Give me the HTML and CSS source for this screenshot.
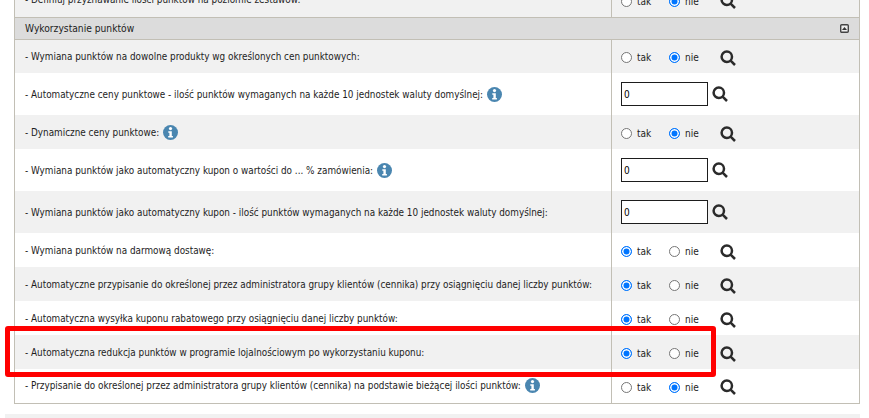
FILE: index.html
```html
<!DOCTYPE html>
<html lang="pl">

<head>
    <meta charset="UTF-8">
    <title>Program punktowy</title>
    <link rel="stylesheet" href="styles.css">
</head>

<body>
    <div class="page">
        <table class="settings">
            <tr class="odd short">
                <td class="name">- Definiuj przyznawanie ilości punktów na poziomie zestawów:</td>
                <td class="val">
                    <div class="radios">
                        <label><span class="radio"></span>tak</label>
                        <label><span class="radio on"></span>nie</label>
                        <svg class="loupe" viewBox="0 0 16 16"><circle cx="6.8" cy="6.8" r="5.2" /><path d="M10.6 10.6 15 15" /></svg>
                    </div>
                </td>
            </tr>
            <tr class="head">
                <td colspan="2">
                    <div class="head-in">
                        <span>Wykorzystanie punktów</span>
                        <svg class="toggle" viewBox="0 0 9 9"><rect x=".7" y=".7" width="7.6" height="7.6" rx="1" /><path d="M4.5 3 7 6H2z" /></svg>
                    </div>
                </td>
            </tr>
            <tr class="odd short">
                <td class="name">- Wymiana punktów na dowolne produkty wg określonych cen punktowych:</td>
                <td class="val">
                    <div class="radios">
                        <label><span class="radio"></span>tak</label>
                        <label><span class="radio on"></span>nie</label>
                        <svg class="loupe" viewBox="0 0 16 16"><circle cx="6.8" cy="6.8" r="5.2" /><path d="M10.6 10.6 15 15" /></svg>
                    </div>
                </td>
            </tr>
            <tr class="tall">
                <td class="name">- Automatyczne ceny punktowe - ilość punktów wymaganych na każde 10 jednostek waluty domyślnej:
                    <svg class="info" viewBox="0 0 15 15"><circle cx="7.5" cy="7.5" r="7.5" /><circle class="dot" cx="7.5" cy="3.6" r="1.6" /><path class="dot" d="M5.3 6.2h3.5v4.9h1.1v1.5H5.2v-1.5h1.2V7.7H5.3z" /></svg>
                </td>
                <td class="val">
                    <div class="amount">
                        <input type="text" value="0">
                        <svg class="loupe" viewBox="0 0 16 16"><circle cx="6.8" cy="6.8" r="5.2" /><path d="M10.6 10.6 15 15" /></svg>
                    </div>
                </td>
            </tr>
            <tr class="odd short">
                <td class="name">- Dynamiczne ceny punktowe:
                    <svg class="info" viewBox="0 0 15 15"><circle cx="7.5" cy="7.5" r="7.5" /><circle class="dot" cx="7.5" cy="3.6" r="1.6" /><path class="dot" d="M5.3 6.2h3.5v4.9h1.1v1.5H5.2v-1.5h1.2V7.7H5.3z" /></svg>
                </td>
                <td class="val">
                    <div class="radios">
                        <label><span class="radio"></span>tak</label>
                        <label><span class="radio on"></span>nie</label>
                        <svg class="loupe" viewBox="0 0 16 16"><circle cx="6.8" cy="6.8" r="5.2" /><path d="M10.6 10.6 15 15" /></svg>
                    </div>
                </td>
            </tr>
            <tr class="tall">
                <td class="name">- Wymiana punktów jako automatyczny kupon o wartości do ... % zamówienia:
                    <svg class="info" viewBox="0 0 15 15"><circle cx="7.5" cy="7.5" r="7.5" /><circle class="dot" cx="7.5" cy="3.6" r="1.6" /><path class="dot" d="M5.3 6.2h3.5v4.9h1.1v1.5H5.2v-1.5h1.2V7.7H5.3z" /></svg>
                </td>
                <td class="val">
                    <div class="amount">
                        <input type="text" value="0">
                        <svg class="loupe" viewBox="0 0 16 16"><circle cx="6.8" cy="6.8" r="5.2" /><path d="M10.6 10.6 15 15" /></svg>
                    </div>
                </td>
            </tr>
            <tr class="odd tall">
                <td class="name">- Wymiana punktów jako automatyczny kupon - ilość punktów wymaganych na każde 10 jednostek waluty domyślnej:</td>
                <td class="val">
                    <div class="amount">
                        <input type="text" value="0">
                        <svg class="loupe" viewBox="0 0 16 16"><circle cx="6.8" cy="6.8" r="5.2" /><path d="M10.6 10.6 15 15" /></svg>
                    </div>
                </td>
            </tr>
            <tr class="short">
                <td class="name">- Wymiana punktów na darmową dostawę:</td>
                <td class="val">
                    <div class="radios">
                        <label><span class="radio on"></span>tak</label>
                        <label><span class="radio"></span>nie</label>
                        <svg class="loupe" viewBox="0 0 16 16"><circle cx="6.8" cy="6.8" r="5.2" /><path d="M10.6 10.6 15 15" /></svg>
                    </div>
                </td>
            </tr>
            <tr class="odd short">
                <td class="name">- Automatyczne przypisanie do określonej przez administratora grupy klientów (cennika) przy osiągnięciu danej liczby punktów:</td>
                <td class="val">
                    <div class="radios">
                        <label><span class="radio on"></span>tak</label>
                        <label><span class="radio"></span>nie</label>
                        <svg class="loupe" viewBox="0 0 16 16"><circle cx="6.8" cy="6.8" r="5.2" /><path d="M10.6 10.6 15 15" /></svg>
                    </div>
                </td>
            </tr>
            <tr class="short">
                <td class="name">- Automatyczna wysyłka kuponu rabatowego przy osiągnięciu danej liczby punktów:</td>
                <td class="val">
                    <div class="radios">
                        <label><span class="radio on"></span>tak</label>
                        <label><span class="radio"></span>nie</label>
                        <svg class="loupe" viewBox="0 0 16 16"><circle cx="6.8" cy="6.8" r="5.2" /><path d="M10.6 10.6 15 15" /></svg>
                    </div>
                </td>
            </tr>
            <tr class="odd short">
                <td class="name">- Automatyczna redukcja punktów w programie lojalnościowym po wykorzystaniu kuponu:</td>
                <td class="val">
                    <div class="radios">
                        <label><span class="radio on"></span>tak</label>
                        <label><span class="radio"></span>nie</label>
                        <svg class="loupe" viewBox="0 0 16 16"><circle cx="6.8" cy="6.8" r="5.2" /><path d="M10.6 10.6 15 15" /></svg>
                    </div>
                </td>
            </tr>
            <tr class="short">
                <td class="name">- Przypisanie do określonej przez administratora grupy klientów (cennika) na podstawie bieżącej ilości punktów:
                    <svg class="info" viewBox="0 0 15 15"><circle cx="7.5" cy="7.5" r="7.5" /><circle class="dot" cx="7.5" cy="3.6" r="1.6" /><path class="dot" d="M5.3 6.2h3.5v4.9h1.1v1.5H5.2v-1.5h1.2V7.7H5.3z" /></svg>
                </td>
                <td class="val">
                    <div class="radios">
                        <label><span class="radio"></span>tak</label>
                        <label><span class="radio on"></span>nie</label>
                        <svg class="loupe" viewBox="0 0 16 16"><circle cx="6.8" cy="6.8" r="5.2" /><path d="M10.6 10.6 15 15" /></svg>
                    </div>
                </td>
            </tr>
        </table>
        <div class="strip"></div>
    </div>
    <div class="highlight"></div>
</body>

</html>
```

FILE: styles.css
```css
html,
body {
    margin: 0;
    height: 100%;
    overflow: hidden;
    background: #fff;
}

body {
    font-family: "DejaVu Sans", sans-serif;
    font-stretch: condensed;
    font-size: 9.85px;
    color: #1d1d1d;
    position: relative;
}

.page {
    margin-top: -17px;
    padding: 0 9px 0 14px;
}

.settings {
    width: 846px;
    table-layout: fixed;
    border-collapse: collapse;
    border: 1px solid #c2bfb5;
    border-top: 0;
}

.settings td {
    padding: 0;
}

.short {
    height: 34px;
}

.tall {
    height: 42px;
}

.odd {
    background: #f1f1f1;
}

.name {
    width: 586px;
    padding-left: 10px !important;
    border-right: 1px solid #c2bfb5;
}

.val {
    padding-left: 9px !important;
}

.head {
    height: 22px;
    background: #dcdcdc;
    border-top: 1px solid #c2bfb5;
    border-bottom: 1px solid #c2bfb5;
}

.head-in {
    display: flex;
    align-items: center;
    justify-content: space-between;
    padding: 0 10px;
    font-size: 10.2px;
}

.toggle {
    width: 9px;
    height: 9px;
}

.toggle rect {
    fill: #eee;
    stroke: #444;
    stroke-width: 1.4;
}

.toggle path {
    fill: #333;
}

.radios {
    display: flex;
    align-items: center;
    padding-top: 3px;
    font-size: 10px;
}

.radios label {
    display: flex;
    align-items: center;
    width: 48px;
}

.radio {
    box-sizing: border-box;
    width: 11px;
    height: 11px;
    margin-right: 5px;
    border: 1px solid #767676;
    border-radius: 50%;
    background: #fff;
}

.radio.on {
    border: 1px solid #0075ff;
    background: #0075ff;
    box-shadow: inset 0 0 0 1.5px #fff;
}

.loupe {
    width: 16px;
    height: 16px;
    fill: none;
    stroke: #2b2b2b;
    stroke-width: 2.5;
}

.radios .loupe {
    margin-left: 3px;
}

.amount {
    display: flex;
    align-items: center;
    gap: 4px;
}

.amount input {
    box-sizing: border-box;
    width: 87px;
    height: 24px;
    padding: 0 2px;
    border: 1px solid #1d1d1d;
    font-family: "DejaVu Sans", sans-serif;
    font-stretch: condensed;
    font-size: 10px;
}

.info {
    width: 15px;
    height: 15px;
    margin-left: 1px;
    vertical-align: middle;
    fill: #4a86b0;
}

.info .dot {
    fill: #fff;
}

.strip {
    height: 8px;
    margin: 10px 0 0 -9px;
    background: #f1f1f1;
}

.highlight {
    position: absolute;
    left: 5px;
    top: 326px;
    width: 701px;
    height: 41px;
    border: 5px solid #f00;
    border-radius: 3px;
}
```
